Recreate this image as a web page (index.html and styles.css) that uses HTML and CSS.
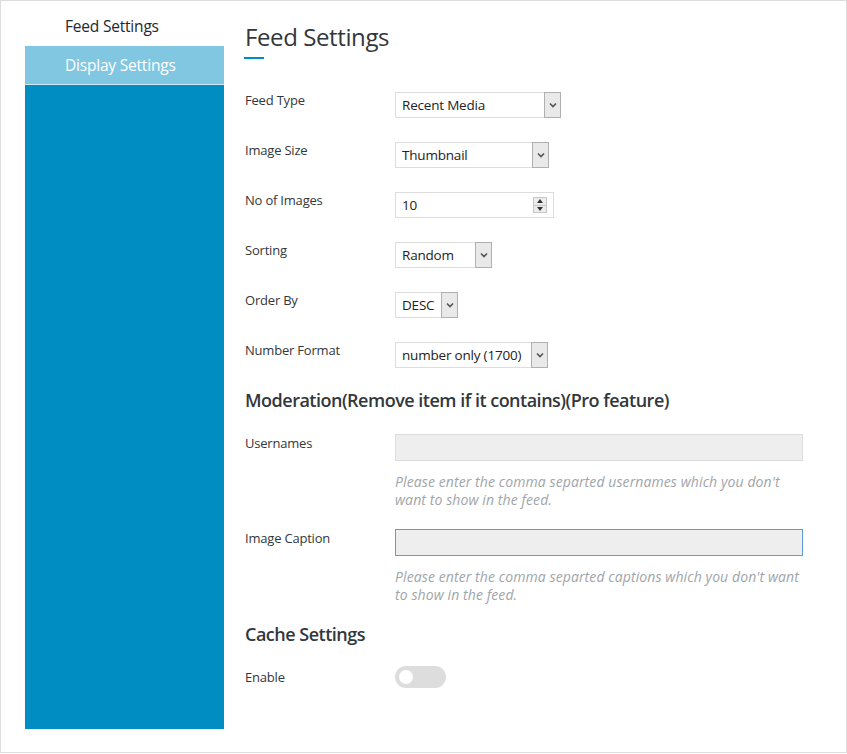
FILE: index.html
```html
<!DOCTYPE html>
<html>
<head>
<meta charset="utf-8">
<link rel="stylesheet" href="styles.css">
</head>
<body>
<div class="wrap">
  <nav class="sidebar">
    <div class="tab tab-active">Feed Settings</div>
    <div class="tab tab-light">Display Settings</div>
  </nav>
  <main class="content">
    <h1 class="title">Feed Settings</h1>
    <div class="title-bar"></div>

    <div class="rows">
      <div class="row">
        <div class="label">Feed Type</div>
        <div class="select w-feed"><span class="val">Recent Media</span><span class="arrow"><svg width="8" height="6" viewBox="0 0 8 6"><path d="M1 1.5 L4 4.5 L7 1.5" fill="none" stroke="#555" stroke-width="1.6"/></svg></span></div>
      </div>
      <div class="row">
        <div class="label">Image Size</div>
        <div class="select w-size"><span class="val">Thumbnail</span><span class="arrow"><svg width="8" height="6" viewBox="0 0 8 6"><path d="M1 1.5 L4 4.5 L7 1.5" fill="none" stroke="#555" stroke-width="1.6"/></svg></span></div>
      </div>
      <div class="row">
        <div class="label">No of Images</div>
        <div class="select number w-num"><span class="val">10</span><span class="spin"><span class="spin-btn"><svg width="6" height="4" viewBox="0 0 6 4"><path d="M0 4 L3 0 L6 4 Z" fill="#333"/></svg></span><span class="spin-btn"><svg width="6" height="4" viewBox="0 0 6 4"><path d="M0 0 L3 4 L6 0 Z" fill="#333"/></svg></span></span></div>
      </div>
      <div class="row">
        <div class="label">Sorting</div>
        <div class="select w-sort"><span class="val">Random</span><span class="arrow"><svg width="8" height="6" viewBox="0 0 8 6"><path d="M1 1.5 L4 4.5 L7 1.5" fill="none" stroke="#555" stroke-width="1.6"/></svg></span></div>
      </div>
      <div class="row">
        <div class="label">Order By</div>
        <div class="select w-order"><span class="val">DESC</span><span class="arrow"><svg width="8" height="6" viewBox="0 0 8 6"><path d="M1 1.5 L4 4.5 L7 1.5" fill="none" stroke="#555" stroke-width="1.6"/></svg></span></div>
      </div>
      <div class="row">
        <div class="label">Number Format</div>
        <div class="select w-format"><span class="val">number only (1700)</span><span class="arrow"><svg width="8" height="6" viewBox="0 0 8 6"><path d="M1 1.5 L4 4.5 L7 1.5" fill="none" stroke="#555" stroke-width="1.6"/></svg></span></div>
      </div>
    </div>

    <h2 class="section">Moderation(Remove item if it contains)(Pro feature)</h2>

    <div class="field">
      <div class="label label-input">Usernames</div>
      <div class="field-body">
        <div class="text-input"></div>
        <p class="help">Please enter the comma separted usernames which you don't want to show in the feed.</p>
      </div>
    </div>
    <div class="field field-2">
      <div class="label label-input">Image Caption</div>
      <div class="field-body">
        <div class="text-input focused"></div>
        <p class="help">Please enter the comma separted captions which you don't want to show in the feed.</p>
      </div>
    </div>

    <h2 class="section section-cache">Cache Settings</h2>
    <div class="field field-toggle">
      <div class="label label-toggle">Enable</div>
      <div class="toggle"><span class="knob"></span></div>
    </div>
  </main>
</div>
</body>
</html>
```

FILE: styles.css
```css
* { box-sizing: border-box; }
html, body { margin: 0; padding: 0; background: #fff; }
body {
  font-family: "Open Sans", "Noto Sans", sans-serif;
  color: #32373c;
}
.wrap {
  width: 847px;
  height: 753px;
  border: 1px solid #dcdcdc;
  display: flex;
  align-items: flex-start;
  padding: 6px 0 0 24px;
}
.sidebar {
  width: 199px;
  height: 722px;
  background: #008ec2;
  flex: none;
}
.tab {
  height: 39px;
  line-height: 38px;
  padding-left: 40px;
  font-size: 15.5px;
  letter-spacing: -0.2px;
}
.tab-active { background: #fff; color: #23282d; }
.tab-light {
  background: #82c7e2;
  color: #fff;
  border-bottom: 1px solid #cde9f4;
  height: 39px;
}
.content {
  margin-left: 21px;
  flex: 1;
  padding-top: 14px;
}
.title {
  margin: 0;
  font-size: 24px;
  line-height: 32px;
  font-weight: 400;
  color: #32373c;
  letter-spacing: -0.4px;
}
.title-bar {
  width: 20px;
  height: 2px;
  background: #008ec2;
  margin: 4px 0 0 -1px;
}
.rows { margin-top: 33px; }
.row {
  display: grid;
  grid-template-columns: 150px auto;
  justify-content: start;
  align-items: start;
  margin-bottom: 24px;
}
.label {
  font-size: 13px;
  line-height: 16px;
  color: #32373c;
  letter-spacing: -0.2px;
}
.select {
  display: flex;
  height: 26px;
  border: 1px solid #dddddd;
  background: #fff;
}
.select .val {
  flex: 1;
  padding-left: 6px;
  font-size: 13.5px;
  line-height: 24px;
  color: #222;
  letter-spacing: -0.2px;
  white-space: nowrap;
  overflow: hidden;
}
.select .arrow {
  width: 17px;
  margin: -1px -1px -1px 0;
  border: 1px solid #b0b0b0;
  background: #e9e9e9;
  display: flex;
  align-items: center;
  justify-content: center;
}
.w-feed { width: 166px; }
.w-size { width: 154px; }
.w-num { width: 159px; }
.w-sort { width: 97px; }
.w-order { width: 63px; }
.w-format { width: 153px; }
.number { align-items: center; }
.spin {
  width: 14px;
  height: 16px;
  margin-right: 6px;
  display: flex;
  flex-direction: column;
  border: 1px solid #c8c8c8;
  background: #ececec;
}
.spin-btn {
  flex: 1;
  display: flex;
  align-items: center;
  justify-content: center;
}
.spin-btn + .spin-btn { border-top: 1px solid #c8c8c8; }
.section {
  margin: 0;
  font-size: 18px;
  line-height: 24px;
  font-weight: 600;
  color: #32373c;
  letter-spacing: -0.5px;
  padding-top: 0;
}
.rows + .section { margin-top: -4px; }
.field {
  display: grid;
  grid-template-columns: 150px 408px;
  align-items: start;
  margin-top: 22px;
}
.field-2 { margin-top: 20px; }
.label-input { padding-top: 1px; }
.text-input {
  height: 27px;
  border: 1px solid #dddddd;
  background: #eeeeee;
}
.text-input.focused { border-color: #5b9dd9; }
.help {
  margin: 12px 0 0;
  font-size: 14px;
  line-height: 18px;
  font-style: italic;
  color: #a0a5aa;
  letter-spacing: 0.1px;
}
.section-cache { margin-top: 18px; }
.field-toggle { margin-top: 20px; align-items: center; }
.label-toggle { padding-top: 0; }
.toggle {
  width: 51px;
  height: 22px;
  border-radius: 11px;
  background: #dddddd;
  position: relative;
}
.knob {
  position: absolute;
  left: 4px;
  top: 4px;
  width: 14px;
  height: 14px;
  border-radius: 50%;
  background: #fff;
}
```
